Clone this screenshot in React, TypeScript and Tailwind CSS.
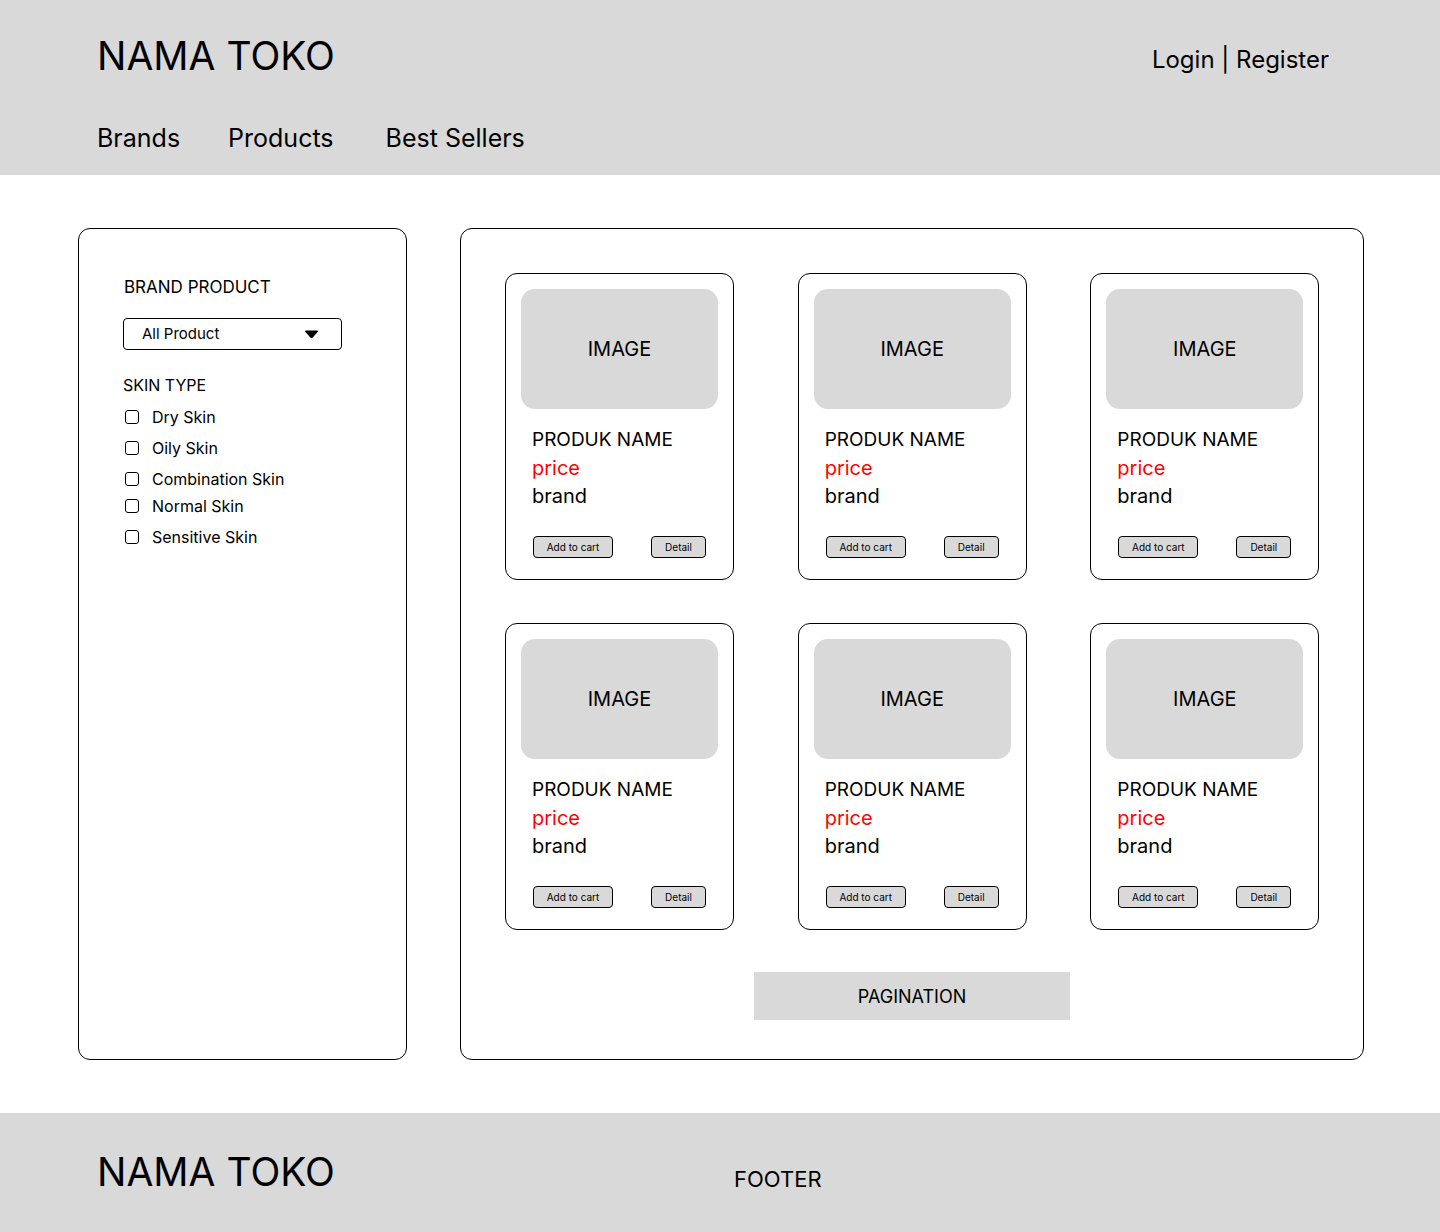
import React from "react";

const skinTypes = ["Dry Skin", "Oily Skin", "Combination Skin", "Normal Skin", "Sensitive Skin"];
const products = [1, 2, 3, 4, 5, 6];

const font = { fontFamily: "Inter, 'Noto Sans', sans-serif" };

const ProductCard = () => {
  return (
    <div className="w-[229px] h-[307px] border border-black rounded-[12px] p-[15px] flex flex-col">
      <div className="h-[120px] bg-[#d9d9d9] rounded-[14px] flex items-center justify-center text-[20px] text-black">
        IMAGE
      </div>
      <div className="pl-[11px] pt-[17px] flex flex-col leading-[28px] text-[20px]">
        <span className="text-black text-[19px]">PRODUK NAME</span>
        <span className="text-[#ff0000]">price</span>
        <span className="text-black">brand</span>
      </div>
      <div className="mt-auto mb-[6px] flex justify-between px-[12px]">
        <button className="w-[80px] h-[22px] bg-[#d9d9d9] border border-black rounded-[4px] text-[10px] leading-none text-black">
          Add to cart
        </button>
        <button className="w-[55px] h-[22px] bg-[#d9d9d9] border border-black rounded-[4px] text-[10px] leading-none text-black">
          Detail
        </button>
      </div>
    </div>
  );
};

export default function App() {
  return (
    <div className="w-[1440px] min-h-[1232px] bg-white text-black flex flex-col" style={font}>
      {/* Header */}
      <header className="h-[175px] bg-[#d9d9d9] px-[97px] pr-[111px] pt-[34px] flex flex-col">
        <div className="flex justify-between items-start">
          <h1 className="text-[39px] leading-[44px] font-normal">NAMA TOKO</h1>
          <a className="text-[24px] leading-[30px] mt-[11px]">Login | Register</a>
        </div>
        <nav className="mt-[45px] flex gap-[48px] text-[25px] leading-[30px]">
          <a>Brands</a>
          <a className="mr-[4px]">Products</a>
          <a>Best Sellers</a>
        </nav>
      </header>

      {/* Main */}
      <main className="flex gap-[53px] pl-[78px] pr-[76px] py-[53px]">
        <aside className="w-[329px] h-[832px] shrink-0 border border-black rounded-[12px] pl-[44px] pt-[46px]">
          <h2 className="text-[17px] leading-[24px] pl-[1px]">BRAND PRODUCT</h2>
          <div className="mt-[19px] w-[219px] h-[32px] border border-black rounded-[4px] flex items-center justify-between pl-[18px] pr-[22px] text-[15px]">
            <span>All Product</span>
            <svg width="15" height="9" viewBox="0 0 15 9">
              <path d="M1 1.5 C1 0.5 1.5 0.5 2.5 0.5 L12.5 0.5 C13.5 0.5 14 0.5 14 1.5 L8.5 7.8 C8 8.4 7 8.4 6.5 7.8 Z" fill="black" />
            </svg>
          </div>
          <h2 className="mt-[23px] text-[16px] leading-[24px]">SKIN TYPE</h2>
          <ul className="mt-[4px] flex flex-col">
            {skinTypes.map((s, i) => (
              <li key={s} className={`flex items-center gap-[13px] h-[31px] text-[16px] ${i === 3 ? "-mt-[4px]" : ""}`}>
                <span className="ml-[2px] w-[14px] h-[14px] border border-black rounded-[3px] bg-white" />
                {s}
              </li>
            ))}
          </ul>
        </aside>

        <section className="flex-1 h-[832px] border border-black rounded-[12px] px-[44px] pt-[44px] flex flex-col items-center">
          <div className="grid grid-cols-3 gap-x-[64px] gap-y-[43px]">
            {products.map((p) => (
              <ProductCard key={p} />
            ))}
          </div>
          <div className="mt-[42px] w-[316px] h-[48px] bg-[#d9d9d9] flex items-center justify-center text-[18px]">
            PAGINATION
          </div>
        </section>
      </main>

      {/* Footer */}
      <footer className="h-[120px] bg-[#d9d9d9] px-[97px] flex items-center">
        <h1 className="text-[39px] leading-[44px] w-[637px] -mt-[2px]">NAMA TOKO</h1>
        <span className="text-[22px] mt-[12px]">FOOTER</span>
      </footer>
    </div>
  );
}
